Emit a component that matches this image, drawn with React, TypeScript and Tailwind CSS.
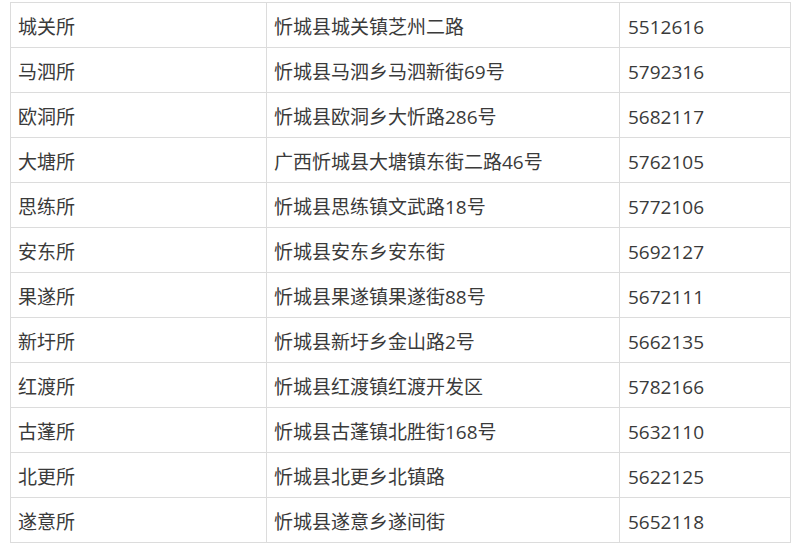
const rows = [
  ['城关所', '忻城县城关镇芝州二路', '5512616'],
  ['马泗所', '忻城县马泗乡马泗新街69号', '5792316'],
  ['欧洞所', '忻城县欧洞乡大忻路286号', '5682117'],
  ['大塘所', '广西忻城县大塘镇东街二路46号', '5762105'],
  ['思练所', '忻城县思练镇文武路18号', '5772106'],
  ['安东所', '忻城县安东乡安东街', '5692127'],
  ['果遂所', '忻城县果遂镇果遂街88号', '5672111'],
  ['新圩所', '忻城县新圩乡金山路2号', '5662135'],
  ['红渡所', '忻城县红渡镇红渡开发区', '5782166'],
  ['古蓬所', '忻城县古蓬镇北胜街168号', '5632110'],
  ['北更所', '忻城县北更乡北镇路', '5622125'],
  ['遂意所', '忻城县遂意乡遂间街', '5652118'],
];

export default function App() {
  return (
    <div className="w-[800px] h-[551px] bg-white pl-[10px] pt-[2px] font-['Open_Sans','Noto_Sans_CJK_SC',sans-serif] text-[19px] text-[#3a3a3a]">
      <table className="border-collapse table-fixed w-[780px]">
        <colgroup>
          <col className="w-[256px]" />
          <col className="w-[353px]" />
          <col className="w-[171px]" />
        </colgroup>
        <tbody>
          {rows.map(([name, addr, tel]) => (
            <tr key={name} className="h-[45px]">
              <td className="border border-[#dcdcdc] px-[7px] pt-[4px] pb-0 leading-[40px]">{name}</td>
              <td className="border border-[#dcdcdc] px-[7px] pt-[4px] pb-0 leading-[40px]">{addr}</td>
              <td className="border border-[#dcdcdc] px-[8px] pt-[4px] pb-0 leading-[40px]">{tel}</td>
            </tr>
          ))}
        </tbody>
      </table>
    </div>
  );
}
